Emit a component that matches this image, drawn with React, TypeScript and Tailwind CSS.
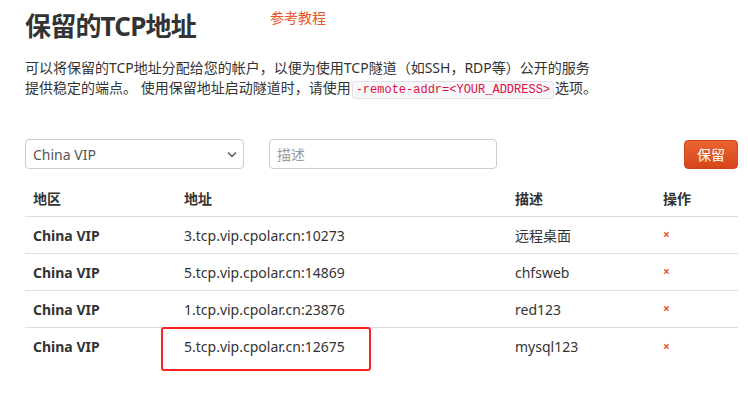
import React from 'react';

const rows = [
  { region: 'China VIP', addr: '3.tcp.vip.cpolar.cn:10273', desc: '远程桌面' },
  { region: 'China VIP', addr: '5.tcp.vip.cpolar.cn:14869', desc: 'chfsweb' },
  { region: 'China VIP', addr: '1.tcp.vip.cpolar.cn:23876', desc: 'red123' },
  { region: 'China VIP', addr: '5.tcp.vip.cpolar.cn:12675', desc: 'mysql123', marked: true },
];

const font = "font-['Noto_Sans','Noto_Sans_CJK_SC',sans-serif]";

export default function App() {
  return (
    <div className={`w-[748px] h-[402px] bg-white text-[#333] ${font} pl-[25px] pr-[10px] pt-[8px] overflow-hidden`}>
      {/* title + tutorial link */}
      <div className="flex items-start">
        <h1 className="text-[26px] leading-[36px] font-bold text-[#333] tracking-[-0.8px]">保留的TCP地址</h1>
        <a className="ml-[74px] text-[14px] leading-[20px] text-[#e8562a]">参考教程</a>
      </div>

      <p className="mt-[14px] text-[14px] leading-[20px] text-[#333] w-[600px]">
        可以将保留的TCP地址分配给您的帐户，以便为使用TCP隧道（如SSH，RDP等）公开的服务
        <br />
        提供稳定的端点。 使用保留地址启动隧道时，请使用
        <code className="mx-[1px] px-[3px] py-[1px] rounded-[3px] border border-[#e1e1e8] bg-[#f7f7f9] text-[#dd1144] text-[12px] font-['Liberation_Mono',monospace]">
          -remote-addr=&lt;YOUR_ADDRESS&gt;
        </code>
        选项。
      </p>

      {/* form row */}
      <div className="mt-[39px] flex items-center w-[713px]">
        <div className="relative w-[219px] h-[30px] rounded-[4px] border border-[#ccc] flex items-center px-[7px] text-[14px] text-[#555]">
          China VIP
          <svg className="absolute right-[6px] top-[11px]" width="10" height="7" viewBox="0 0 10 7">
            <path d="M1 1.5 L5 5.5 L9 1.5" fill="none" stroke="#555" strokeWidth="1.4" />
          </svg>
        </div>
        <div className="ml-[25px] w-[228px] h-[30px] rounded-[4px] border border-[#ccc] flex items-center px-[7px] text-[14px] text-[#999]">
          描述
        </div>
        <button className="ml-auto w-[54px] h-[29px] rounded-[4px] border border-[#c9461c] bg-gradient-to-b from-[#ea6431] to-[#d6461a] text-white text-[14px]">
          保留
        </button>
      </div>

      {/* table */}
      <div className="mt-[11px] w-[713px] relative text-[14px]">
        <div className="grid grid-cols-[151px_331px_148px_83px] h-[37px] items-center font-bold border-b border-[#ddd]">
          <div className="pl-[8px]">地区</div>
          <div className="pl-[8px]">地址</div>
          <div className="pl-[8px]">描述</div>
          <div className="pl-[8px]">操作</div>
        </div>
        {rows.map((r, i) => (
          <div
            key={i}
            className={`grid grid-cols-[151px_331px_148px_83px] h-[37px] items-center ${i < rows.length - 1 ? 'border-b border-[#ddd]' : ''}`}
          >
            <div className="pl-[8px] font-bold">{r.region}</div>
            <div className="pl-[8px] relative">
              {r.addr}
              {r.marked && (
                <div className="absolute left-[-15px] top-[-9px] w-[210px] h-[44px] border-2 border-[#f22] rounded-[3px]" />
              )}
            </div>
            <div className="pl-[8px]">{r.desc}</div>
            <div className="pl-[8px] text-[#e8562a] text-[12px] font-bold">×</div>
          </div>
        ))}
      </div>
    </div>
  );
}
